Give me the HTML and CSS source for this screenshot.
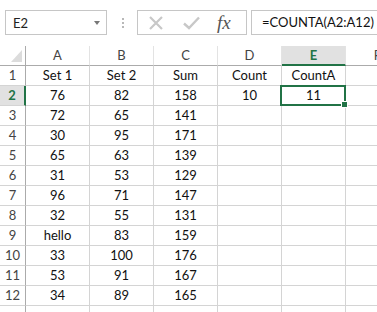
FILE: index.html
```html
<!DOCTYPE html>
<html lang="en">
<head>
    <meta charset="UTF-8">
    <title>COUNTA - Sheet</title>
    <link rel="stylesheet" href="styles.css">
</head>
<body>
    <div class="toolbar">
        <div class="namebox">
            <span>E2</span>
            <span class="arrow"></span>
        </div>
        <div class="grip"><i></i><i></i><i></i></div>
        <div class="fxbox">
            <svg class="ico" width="16" height="16" viewBox="0 0 16 16">
                <path d="M2 2 L14 14 M14 2 L2 14" stroke="#c8c8c8" stroke-width="2.2" fill="none"/>
            </svg>
            <svg class="ico" width="17" height="14" viewBox="0 0 17 14">
                <path d="M1 7.5 L6 12 L16 1.5" stroke="#c8c8c8" stroke-width="2.4" fill="none"/>
            </svg>
            <span class="fx">fx</span>
        </div>
        <div class="formula">=COUNTA(A2:A12)</div>
    </div>

    <div class="sheet">
        <div class="hd corner"><span class="tri"></span></div>
        <div class="hd col">A</div>
        <div class="hd col">B</div>
        <div class="hd col">C</div>
        <div class="hd col">D</div>
        <div class="hd col active">E</div>
        <div class="hd col">F</div>

        <div class="hd row">1</div><div class="c">Set 1</div><div class="c">Set 2</div><div class="c">Sum</div><div class="c">Count</div><div class="c">CountA</div><div class="c"></div>
        <div class="hd row active">2</div><div class="c">76</div><div class="c">82</div><div class="c">158</div><div class="c">10</div><div class="c sel">11</div><div class="c"></div>
        <div class="hd row">3</div><div class="c">72</div><div class="c">65</div><div class="c">141</div><div class="c"></div><div class="c"></div><div class="c"></div>
        <div class="hd row">4</div><div class="c">30</div><div class="c">95</div><div class="c">171</div><div class="c"></div><div class="c"></div><div class="c"></div>
        <div class="hd row">5</div><div class="c">65</div><div class="c">63</div><div class="c">139</div><div class="c"></div><div class="c"></div><div class="c"></div>
        <div class="hd row">6</div><div class="c">31</div><div class="c">53</div><div class="c">129</div><div class="c"></div><div class="c"></div><div class="c"></div>
        <div class="hd row">7</div><div class="c">96</div><div class="c">71</div><div class="c">147</div><div class="c"></div><div class="c"></div><div class="c"></div>
        <div class="hd row">8</div><div class="c">32</div><div class="c">55</div><div class="c">131</div><div class="c"></div><div class="c"></div><div class="c"></div>
        <div class="hd row">9</div><div class="c">hello</div><div class="c">83</div><div class="c">159</div><div class="c"></div><div class="c"></div><div class="c"></div>
        <div class="hd row">10</div><div class="c">33</div><div class="c">100</div><div class="c">176</div><div class="c"></div><div class="c"></div><div class="c"></div>
        <div class="hd row">11</div><div class="c">53</div><div class="c">91</div><div class="c">167</div><div class="c"></div><div class="c"></div><div class="c"></div>
        <div class="hd row">12</div><div class="c">34</div><div class="c">89</div><div class="c">165</div><div class="c"></div><div class="c"></div><div class="c"></div>
        <div class="hd row"></div><div class="c"></div><div class="c"></div><div class="c"></div><div class="c"></div><div class="c"></div><div class="c"></div>
    </div>
</body>
</html>
```

FILE: styles.css
```css
body {
    margin: 0;
    background: #fff;
    font-family: Lato, "Liberation Sans", sans-serif;
    overflow: hidden;
}
.toolbar {
    display: flex;
    align-items: center;
    height: 25px;
    padding: 10px 0 11px 5px;
    white-space: nowrap;
}
.namebox {
    box-sizing: border-box;
    width: 102px;
    height: 25px;
    border: 1px solid #c6c6c6;
    display: flex;
    align-items: center;
    justify-content: space-between;
    padding: 0 6px 0 7px;
    font-size: 13px;
    color: #222;
}
.arrow {
    width: 0;
    height: 0;
    border-left: 3.5px solid transparent;
    border-right: 3.5px solid transparent;
    border-top: 4px solid #777;
}
.grip {
    display: flex;
    flex-direction: column;
    gap: 2px;
    margin: 0 13px 0 15px;
}
.grip i {
    display: block;
    width: 2px;
    height: 2px;
    background: #b8b8b8;
}
.fxbox {
    box-sizing: border-box;
    width: 110px;
    height: 25px;
    border: 1px solid #c6c6c6;
    display: flex;
    align-items: center;
    padding-left: 10px;
}
.ico {
    display: block;
    margin-right: 19px;
}
.fx {
    font-family: "Liberation Serif", serif;
    font-style: italic;
    font-size: 19px;
    color: #555;
    margin-left: -2px;
}
.formula {
    box-sizing: border-box;
    flex: 1;
    height: 25px;
    margin-left: 4px;
    border: 1px solid #c6c6c6;
    border-right: none;
    padding-left: 10px;
    line-height: 23px;
    font-size: 13px;
    color: #111;
}
.sheet {
    display: grid;
    grid-template-columns: 26px repeat(6, 64px);
    grid-auto-rows: 20px;
}
.hd, .c {
    box-sizing: border-box;
    border-right: 1px solid #d4d4d4;
    border-bottom: 1px solid #d4d4d4;
    text-align: center;
    line-height: 19px;
    font-size: 13px;
}
.c {
    color: #111;
}
.hd {
    color: #444;
}
.hd.col {
    border-right-color: #e3e3e3;
    border-bottom-color: #ababab;
}
.hd.row {
    border-right-color: #ababab;
    border-bottom-color: #d4d4d4;
}
.hd.corner {
    position: relative;
    border-right-color: #ababab;
    border-bottom-color: #ababab;
}
.tri {
    position: absolute;
    right: 3px;
    bottom: 3px;
    width: 0;
    height: 0;
    border-left: 11px solid transparent;
    border-bottom: 12px solid #dcdcdc;
}
.hd.active {
    background: #e1e1e1;
    color: #217346;
    font-weight: bold;
}
.hd.col.active {
    border-bottom: 2px solid #217346;
    line-height: 18px;
}
.hd.row.active {
    border-right: 2px solid #217346;
}
.sel {
    position: relative;
}
.sel::after {
    content: "";
    position: absolute;
    left: -2px;
    top: -1px;
    right: -1px;
    bottom: -1px;
    border: 2px solid #217346;
}
.sel::before {
    content: "";
    position: absolute;
    right: -3px;
    bottom: -3px;
    width: 5px;
    height: 5px;
    background: #217346;
    border: 1px solid #fff;
    z-index: 1;
}
```
